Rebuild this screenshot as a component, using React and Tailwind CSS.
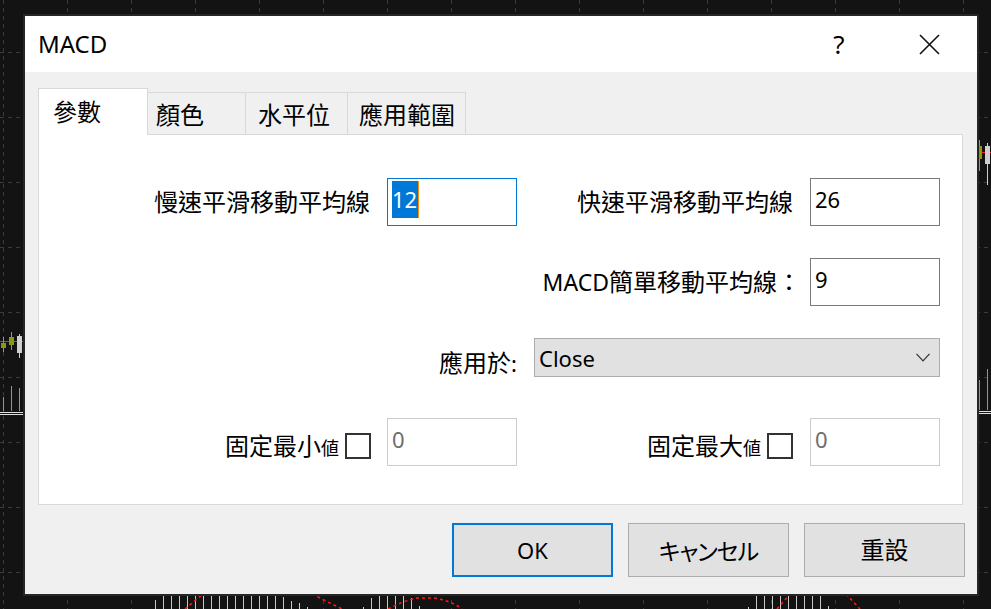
import React from 'react';

const FONT = { fontFamily: '"Noto Sans", "Noto Sans CJK TC", sans-serif' };
const JP = { fontFamily: '"Noto Sans CJK JP", "Noto Sans CJK TC", sans-serif' };

// chart behind the dialog: dashed grid, a few candles, volume bars, MA line
const ChartBackdrop = () => {
  const vx = Array.from({ length: 16 }, (_, i) => 3 + i * 64);
  const hy = Array.from({ length: 10 }, (_, i) => -13 + i * 65);
  const bottomBars = [
    [155, 600], [163, 594], [171, 594], [179, 594], [187, 594], [195, 594], [203, 594],
    [211, 594], [219, 594], [227, 594], [235, 594], [243, 594], [251, 594], [259, 594],
    [267, 594], [275, 594], [283, 597], [291, 601], [299, 603], [307, 607],
    [363, 607], [371, 598], [379, 594], [387, 594], [395, 594], [403, 594], [411, 598], [419, 606],
    [748, 607], [756, 594], [764, 594], [772, 594], [780, 594], [788, 594], [796, 594],
    [804, 594], [812, 594], [820, 594], [828, 606],
  ];
  return (
    <svg className="absolute inset-0" width="991" height="609" viewBox="0 0 991 609">
      {vx.map((x) => (
        <line key={'v' + x} x1={x + 0.5} y1="0" x2={x + 0.5} y2="609" stroke="#3a3a3a" strokeDasharray="4 4" />
      ))}
      {hy.map((y) => (
        <line key={'h' + y} x1="0" y1={y + 0.5} x2="991" y2={y + 0.5} stroke="#3a3a3a" strokeDasharray="4 4" />
      ))}

      {/* left strip */}
      <line x1="0" y1="341.5" x2="25" y2="341.5" stroke="#ff2020" />
      <line x1="3.5" y1="337" x2="3.5" y2="352" stroke="#9aaa10" />
      <rect x="1" y="343" width="5" height="5" fill="#8a9a10" />
      <line x1="11.5" y1="332" x2="11.5" y2="350" stroke="#9aaa10" />
      <rect x="9" y="337" width="5" height="8" fill="#8a9a10" />
      <line x1="19.5" y1="334" x2="19.5" y2="358" stroke="#d0d0d0" />
      <rect x="17" y="336" width="5" height="17" fill="#d0d0d0" />
      <line x1="3.5" y1="397" x2="3.5" y2="411" stroke="#9aaa10" />
      <line x1="11.5" y1="386" x2="11.5" y2="411" stroke="#9aaa10" />
      <line x1="19.5" y1="388" x2="19.5" y2="411" stroke="#9aaa10" />
      <line x1="0" y1="412.5" x2="25" y2="412.5" stroke="#e0e0e0" />
      <line x1="0" y1="414.5" x2="25" y2="414.5" stroke="#e0e0e0" />

      {/* right strip */}
      <line x1="977" y1="152.5" x2="991" y2="152.5" stroke="#ff2020" />
      <line x1="979.5" y1="140" x2="979.5" y2="171" stroke="#9aaa10" />
      <rect x="977" y="146" width="5" height="13" fill="#8a9a10" />
      <line x1="987.5" y1="143" x2="987.5" y2="185" stroke="#d0d0d0" />
      <rect x="985" y="146" width="5" height="18" fill="#d0d0d0" />
      <line x1="979.5" y1="380" x2="979.5" y2="410" stroke="#9aaa10" />
      <line x1="987.5" y1="369" x2="987.5" y2="410" stroke="#9aaa10" />
      <line x1="977" y1="411.5" x2="991" y2="411.5" stroke="#e0e0e0" />
      <line x1="977" y1="413.5" x2="991" y2="413.5" stroke="#e0e0e0" />

      {/* bottom strip */}
      {bottomBars.map(([x, y]) => (
        <line key={'b' + x} x1={x + 0.5} y1={y} x2={x + 0.5} y2="609" stroke="#c8c8c8" />
      ))}
      <g fill="none" stroke="#ff1a1a" strokeWidth="1.5" strokeDasharray="3 3">
        <path d="M185 609 L203 594" />
        <path d="M312 594 L342 609" />
        <path d="M388 609 Q403 601 417 598 L433 598 Q450 600 462 609" />
        <path d="M777 609 L790 594" />
        <path d="M846 594 L860 609" />
      </g>
    </svg>
  );
};

const TextInput = ({ value, focused, disabled }) => (
  <div
    className={`w-[130px] h-[48px] bg-white border pl-[4px] pt-[2px] ${
      focused ? 'border-[#0078d7]' : disabled ? 'border-[#cccccc]' : 'border-[#7a7a7a]'
    }`}
  >
    {focused ? (
      <span className="inline-flex items-center h-[37px]">
        <span className="inline-block h-[37px] leading-[37px] bg-[#0078d7] text-white text-[22px] pr-[1px]">{value}</span>
        <span className="inline-block w-[1px] h-[37px] bg-[#ff8a00]" />
      </span>
    ) : (
      <span className={`block h-[37px] leading-[37px] text-[22px] ${disabled ? 'text-[#6d6d6d]' : 'text-black'}`}>
        {value}
      </span>
    )}
  </div>
);

const Checkbox = () => <div className="w-[26px] h-[26px] border-2 border-[#333333] bg-white shrink-0" />;

const tabs = [
  { name: '參數', active: true, w: 'w-[110px]', pl: 'pl-[14px]' },
  { name: '顏色', w: 'w-[98px]', pl: 'pl-[8px]' },
  { name: '水平位', w: 'w-[102px]', pl: 'pl-[12px]' },
  { name: '應用範圍', w: 'w-[118px]', pl: 'pl-[11px]' },
];

const GRID = 'grid grid-cols-[331px_17px_130px_276px_17px_130px]';

export default function App() {
  return (
    <div className="relative w-[991px] h-[609px] overflow-hidden bg-[#131313] pt-[16px] pl-[25px]" style={FONT}>
      <ChartBackdrop />

      <div className="relative z-10 w-[952px] h-[578px] flex flex-col bg-[#f0f0f0] outline-2 outline-[#262626] text-black">
        {/* title bar */}
        <div className="h-[56px] bg-white flex items-center pl-[13px] pr-[37px] shrink-0">
          <span className="text-[24px] leading-none">MACD</span>
          <div className="flex-1" />
          <span className="w-[24px] text-center text-[26px] leading-none">?</span>
          <svg className="ml-[68px]" width="21" height="21" viewBox="0 0 21 21">
            <path d="M1 1 L20 20 M20 1 L1 20" stroke="#111" strokeWidth="1.6" fill="none" />
          </svg>
        </div>

        {/* body */}
        <div className="flex-1 flex flex-col pt-[16px] pl-[13px] pr-[13px]">
          {/* tabs */}
          <div className="flex items-end h-[46px] w-[925px]">
            {tabs.map((t) =>
              t.active ? (
                <div
                  key={t.name}
                  className={`relative z-10 ${t.w} h-[47px] -mb-px bg-white border border-b-0 border-[#d9d9d9] flex items-center ${t.pl} text-[24px] leading-none`}
                >
                  {t.name}
                </div>
              ) : (
                <div
                  key={t.name}
                  className={`${t.w} h-[42px] border-t border-r border-[#d9d9d9] flex items-center pt-[3px] ${t.pl} text-[24px] leading-none`}
                >
                  {t.name}
                </div>
              )
            )}
          </div>

          {/* panel */}
          <div className="w-[925px] h-[371px] bg-white border border-[#d9d9d9] pt-[43px] text-[24px] leading-none">
            <div className={`${GRID} items-center h-[48px]`}>
              <div className="text-right">慢速平滑移動平均線</div>
              <div />
              <TextInput value="12" focused />
              <div className="text-right">快速平滑移動平均線</div>
              <div />
              <TextInput value="26" />
            </div>

            <div className={`${GRID} items-center h-[48px] mt-[32px]`}>
              <div />
              <div />
              <div />
              <div className="text-right whitespace-nowrap -mr-[8px]">
                <span className="text-[23px]">MACD</span>簡單移動平均線：
              </div>
              <div />
              <TextInput value="9" />
            </div>

            <div className={`${GRID} items-center h-[39px] mt-[32px]`}>
              <div className="col-span-3 text-right pt-[10px]">
                應用於<span className="text-[22px]">:</span>
              </div>
              <div className="col-span-3 pl-[17px]">
                <div className="h-[39px] bg-[#e1e1e1] border border-[#adadad] flex items-center pl-[4px] pr-[9px]">
                  <span className="text-[22px] leading-none flex-1">Close</span>
                  <svg width="14" height="9" viewBox="0 0 14 9">
                    <path d="M0.5 0.8 L7 7.8 L13.5 0.8" stroke="#333" strokeWidth="1.2" fill="none" />
                  </svg>
                </div>
              </div>
            </div>

            <div className={`${GRID} items-start h-[48px] mt-[41px]`}>
              <div className="flex items-end justify-end gap-[6px] mt-[15px] -mr-px">
                <span className="leading-none pb-[1px]">
                  固定最小<span className="text-[18px]" style={JP}>値</span>
                </span>
                <Checkbox />
              </div>
              <div />
              <TextInput value="0" disabled />
              <div className="flex items-end justify-end gap-[6px] mt-[15px]">
                <span className="leading-none pb-[1px]">
                  固定最大<span className="text-[18px]" style={JP}>値</span>
                </span>
                <Checkbox />
              </div>
              <div />
              <TextInput value="0" disabled />
            </div>
          </div>

          {/* buttons */}
          <div className="flex justify-end gap-[15px] mt-[18px] -mr-[1px]">
            <div className="w-[161px] h-[54px] bg-[#e1e1e1] border-2 border-[#0078d7] flex items-center justify-center text-[22px] leading-none">
              OK
            </div>
            <div
              className="w-[161px] h-[54px] bg-[#e1e1e1] border border-[#adadad] flex items-center justify-center text-[23px] leading-none tracking-[-1px] [font-feature-settings:'palt']"
              style={JP}
            >
              キャンセル
            </div>
            <div className="w-[161px] h-[54px] bg-[#e1e1e1] border border-[#adadad] flex items-center justify-center text-[24px] leading-none">
              重設
            </div>
          </div>
        </div>
      </div>
    </div>
  );
}
